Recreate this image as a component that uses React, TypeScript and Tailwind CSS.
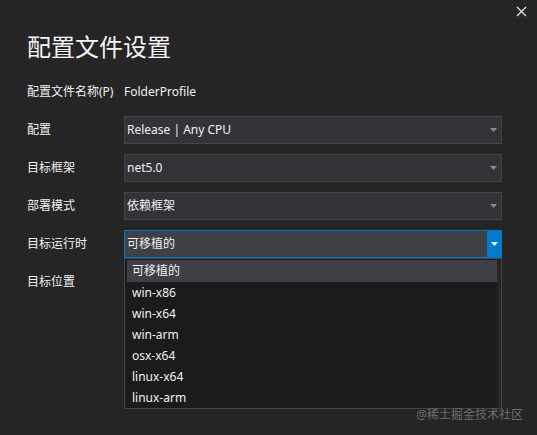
import React from "react";

const rows = [
  { label: "配置", value: "Release | Any CPU" },
  { label: "目标框架", value: "net5.0" },
  { label: "部署模式", value: "依赖框架" },
];

const options = ["可移植的", "win-x86", "win-x64", "win-arm", "osx-x64", "linux-x64", "linux-arm"];

function Caret({ className }: { className?: string }) {
  return (
    <svg width="7" height="4" viewBox="0 0 7 4" className={className}>
      <path d="M0 0h7L3.5 4z" fill="currentColor" />
    </svg>
  );
}

export default function App() {
  return (
    <div
      className="relative w-[537px] h-[435px] overflow-hidden bg-[#252526] text-[#f1f1f1]"
      style={{ fontFamily: "'Noto Sans', 'Noto Sans CJK SC', sans-serif" }}
    >
      {/* close */}
      <button className="absolute top-[6px] right-[10px] text-[#e0e0e0]">
        <svg width="11" height="11" viewBox="0 0 11 11">
          <path d="M1 1l9 9M10 1l-9 9" stroke="currentColor" strokeWidth="1.4" />
        </svg>
      </button>

      <div className="pt-[34px] pl-[27px] pr-[35px]">
        <h1 className="text-[24px] leading-[26px] font-normal text-[#f4f4f4]">配置文件设置</h1>

        <div className="mt-[18px] flex flex-col gap-[10px] text-[12px]">
          <div className="flex items-center h-[28px]">
            <span className="w-[97px]">配置文件名称(P)</span>
            <span>FolderProfile</span>
          </div>

          {rows.map((r) => (
            <div key={r.label} className="flex items-center h-[28px]">
              <span className="w-[97px]">{r.label}</span>
              <div className="flex items-center w-[378px] h-[28px] border border-[#434346] bg-[#333337] pl-[2px] pr-[4px]">
                <span className="flex-1">{r.value}</span>
                <Caret className="text-[#8a8a8a]" />
              </div>
            </div>
          ))}

          <div className="flex items-center h-[28px]">
            <span className="w-[97px]">目标运行时</span>
            <div className="flex items-stretch w-[378px] h-[28px] border border-[#007acc] bg-[#3f3f46]">
              <span className="flex-1 flex items-center pl-[2px]">可移植的</span>
              <span className="w-[14px] bg-[#007acc] flex items-center justify-center text-white">
                <Caret />
              </span>
            </div>
          </div>

          <div className="flex items-center h-[28px]">
            <span className="w-[97px]">目标位置</span>
          </div>
        </div>
      </div>

      {/* open dropdown list */}
      <div className="absolute left-[124px] top-[258px] w-[378px] border border-[#434346] bg-[#1b1b1c] text-[12px] flex">
        <ul className="flex-1 pt-[1px]">
          {options.map((o, i) => (
            <li
              key={o}
              className={
                i === 0
                  ? "h-[22px] flex items-center ml-[2px] pl-[5px] bg-[#3f3f46]"
                  : "h-[21px] flex items-center ml-[2px] pl-[5px]"
              }
            >
              {o}
            </li>
          ))}
        </ul>
        <div className="w-[4px] bg-[#252526]" />
      </div>

      <div className="absolute right-[14px] bottom-[11px] text-[12px] text-[#6e6e6e]">@稀土掘金技术社区</div>
    </div>
  );
}
